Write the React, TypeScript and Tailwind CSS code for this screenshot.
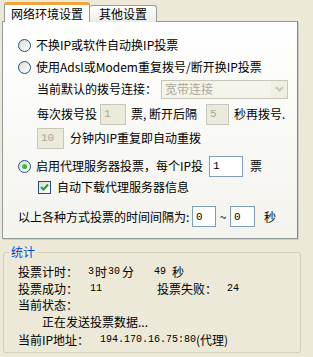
import React from "react";

const cjk = { fontFamily: '"Noto Sans CJK SC", "Noto Sans", sans-serif' };

function Radio({ checked }: { checked?: boolean }) {
  return (
    <span className="relative inline-flex h-[13px] w-[13px] shrink-0 items-center justify-center rounded-full border border-[#1c5180] bg-gradient-to-br from-[#dcdcd7] to-white">
      {checked && (
        <span className="h-[5px] w-[5px] rounded-full bg-gradient-to-br from-[#55d751] to-[#21a121]" />
      )}
    </span>
  );
}

function Checkbox() {
  return (
    <span className="inline-flex h-[13px] w-[13px] shrink-0 items-center justify-center border border-[#1c5180] bg-gradient-to-br from-[#dcdcd7] to-white">
      <svg width="9" height="9" viewBox="0 0 9 9">
        <path d="M1 4 L3.5 6.5 L8 1.5" stroke="#21a121" strokeWidth="2" fill="none" />
      </svg>
    </span>
  );
}

function Field({
  value,
  w,
  disabled,
}: {
  value: string;
  w: string;
  disabled?: boolean;
}) {
  return (
    <span
      className={`inline-flex h-[21px] shrink-0 items-center border px-[3px] font-['Liberation_Mono'] text-[11px] ${w} ${
        disabled
          ? "border-[#c9c7ba] bg-[#ebeadb] text-[#aca899]"
          : "border-[#7f9db9] bg-white text-black"
      }`}
    >
      {value}
    </span>
  );
}

export default function App() {
  return (
    <div
      className="relative h-[357px] w-[313px] overflow-hidden bg-[#ece9d8] text-[12px] leading-[14px] text-black"
      style={cjk}
    >
      {/* tabs */}
      <div className="flex items-end pl-[4px] pt-[2px]">
        <div className="relative z-10 -mb-px flex h-[20px] w-[86px] items-start justify-center rounded-t-[3px] border-x border-t-[3px] border-x-[#919b9c] border-t-[#f0a53c] bg-white pt-[2px]">
          网络环境设置
        </div>
        <div className="-mb-px flex h-[17px] w-[67px] items-start justify-center rounded-t-[3px] border-r border-t border-[#919b9c] bg-gradient-to-b from-white to-[#ecebe6] pt-[1px]">
          其他设置
        </div>
      </div>

      {/* tab page */}
      <div className="ml-[2px] h-[218px] w-[296px] border border-[#919b9c] border-r-[#80867f] bg-gradient-to-b from-white to-[#f4f3ee] pl-[15px] shadow-[1px_1px_0_#d0cfc6]">
        <div className="mt-[13px] flex h-[20px] items-center gap-[5px]">
          <Radio />
          <span>不换IP或软件自动换IP投票</span>
        </div>
        <div className="mt-[2px] flex h-[20px] items-center gap-[5px]">
          <Radio />
          <span>使用Adsl或Modem重复拨号/断开换IP投票</span>
        </div>
        <div className="ml-[19px] mt-[2px] flex h-[20px] items-center">
          <span className="w-[124px]">当前默认的拨号连接：</span>
          <span className="flex h-[19px] w-[127px] items-center justify-between border border-[#c9c7ba] bg-[#f5f4ea] pl-[3px] text-[#aca899]">
            宽带连接
            <span className="flex h-[17px] w-[16px] items-center justify-center bg-[#f1efe2]">
              <svg width="9" height="6" viewBox="0 0 9 6">
                <path d="M1 1 L4.5 4.5 L8 1" stroke="#c9c7ba" strokeWidth="2" fill="none" />
              </svg>
            </span>
          </span>
        </div>
        <div className="ml-[19px] mt-[5px] flex h-[20px] items-center">
          <span className="w-[63px]">每次拨号投</span>
          <Field value="1" w="w-[26px]" disabled />
          <span className="ml-[5px] w-[75px]">票, 断开后隔</span>
          <Field value="5" w="w-[23px]" disabled />
          <span className="ml-[5px]">秒再拨号.</span>
        </div>
        <div className="ml-[19px] mt-[4px] flex h-[20px] items-center">
          <Field value="10" w="w-[27px]" disabled />
          <span className="ml-[6px]">分钟内IP重复即自动重拨</span>
        </div>
        <div className="mt-[8px] flex h-[20px] items-center">
          <Radio checked />
          <span className="ml-[5px] w-[173px]">启用代理服务器投票，每个IP投</span>
          <Field value="1" w="w-[34px]" />
          <span className="ml-[7px]">票</span>
        </div>
        <div className="ml-[20px] mt-[1px] flex h-[20px] items-center">
          <Checkbox />
          <span className="ml-[6px]">自动下载代理服务器信息</span>
        </div>
        <div className="mt-[9px] flex h-[21px] items-center">
          <span className="w-[174px]">以上各种方式投票的时间间隔为:</span>
          <Field value="0" w="w-[24px]" />
          <span className="w-[14px] text-center">~</span>
          <Field value="0" w="w-[25px]" />
          <span className="ml-[9px]">秒</span>
        </div>
      </div>

      {/* statistics group */}
      <div className="relative ml-[3px] mt-[13px] h-[101px] w-[298px] rounded-[3px] border border-[#d0d0bf] pl-[14px]">
        <span className="absolute -top-[8px] left-[5px] bg-[#ece9d8] px-[2px] text-[#0046d5]">
          统计
        </span>
        <div className="mt-[11px] flex h-[16px] items-center">
          <span className="w-[70px]">投票计时：</span>
          <span className="w-[6px] font-['Liberation_Mono'] text-[10px]">3</span>
          <span className="w-[14px] text-center">时</span>
          <span className="w-[14px] font-['Liberation_Mono'] text-[10px]">30</span>
          <span className="w-[32px]">分</span>
          <span className="w-[18px] font-['Liberation_Mono'] text-[10px]">49</span>
          <span>秒</span>
        </div>
        <div className="mt-[1px] flex h-[16px] items-center">
          <span className="w-[72px]">投票成功：</span>
          <span className="w-[67px] font-['Liberation_Mono'] text-[10px]">11</span>
          <span className="w-[70px]">投票失败：</span>
          <span className="font-['Liberation_Mono'] text-[10px]">24</span>
        </div>
        <div className="flex h-[16px] items-center">当前状态：</div>
        <div className="mt-[1px] flex h-[16px] items-center pl-[24px]">
          正在发送投票数据...
        </div>
        <div className="mt-[2px] flex h-[16px] items-center">
          <span className="w-[82px]">当前IP地址：</span>
          <span className="font-['Liberation_Mono'] text-[10px]">194.170.16.75:80</span>
          <span>(代理)</span>
        </div>
      </div>
    </div>
  );
}
